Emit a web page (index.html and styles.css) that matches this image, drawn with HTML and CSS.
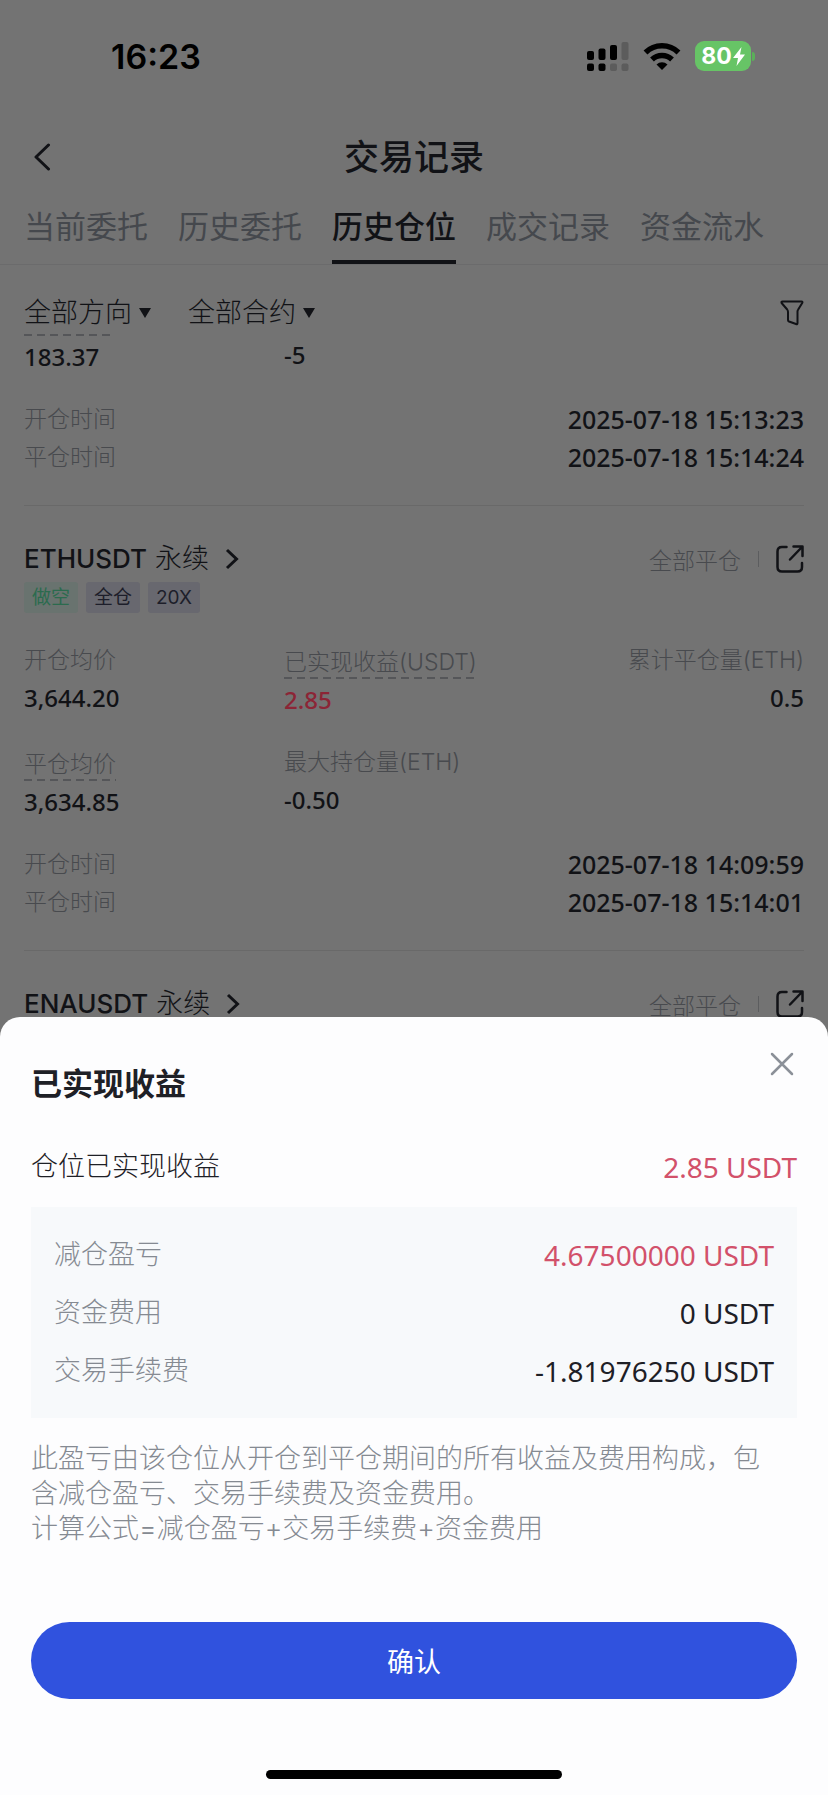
FILE: index.html
```html
<!DOCTYPE html>
<html lang="zh-CN">
<head>
<meta charset="utf-8">
<meta name="viewport" content="width=device-width, initial-scale=1">
<title>交易记录</title>
<link rel="stylesheet" href="styles.css">
</head>
<body>
<div class="page">
  <div class="status">
    <span class="status-time">16:23</span>
    <div class="status-icons">
      <svg width="42" height="30" viewBox="0 0 42 30" aria-hidden="true">
        <g fill="#000"><rect x="0" y="10" width="7" height="9" rx="2"/><rect x="11.500" y="7.500" width="7" height="11.500" rx="2"/><rect x="23" y="4" width="7" height="15" rx="2"/><rect x="0" y="22.500" width="7" height="7.500" rx="2"/><rect x="11.500" y="22.500" width="7" height="7.500" rx="2"/></g>
        <g fill="#5c5c5c"><rect x="34.500" y="1" width="7" height="18" rx="2"/><rect x="23" y="22.500" width="7" height="7.500" rx="2"/><rect x="34.500" y="22.500" width="7" height="7.500" rx="2"/></g>
      </svg>
      <svg width="38" height="28" viewBox="0 0 38 28" aria-hidden="true">
        <g fill="none" stroke="#000" stroke-width="5.500"><path d="M2.500 10.500a23.500 23.500 0 0 1 33 0"/><path d="M9 17.500a14.500 14.500 0 0 1 20 0"/></g>
        <path d="M19 28l-5.500-5.500a8 8 0 0 1 11 0z" fill="#000"/>
      </svg>
      <div class="battery">
        <span class="battery-body">80<svg width="12" height="19" viewBox="0 0 12 19" aria-hidden="true"><path d="M8.500 0L0 11h5L3.500 19 12 7.500H7z" fill="#fff"/></svg></span>
        <span class="battery-nub"></span>
      </div>
    </div>
  </div>

  <header class="header">
    <button class="icon-button" aria-label="返回"><svg width="18" height="28" viewBox="0 0 18 28"><path d="M15.500 2L3 14l12.500 12" fill="none" stroke="#111216" stroke-width="3" stroke-linecap="round" stroke-linejoin="round"/></svg></button>
    <h1 class="title">交易记录</h1>
  </header>

  <nav class="tabs">
    <a class="tab" href="#current">当前委托</a>
    <a class="tab" href="#orders">历史委托</a>
    <a class="tab tab-active" href="#positions" aria-current="page">历史仓位</a>
    <a class="tab" href="#trades">成交记录</a>
    <a class="tab" href="#funds">资金流水</a>
  </nav>

  <div class="filters">
    <button class="filter">全部方向<span class="caret"></span></button>
    <button class="filter">全部合约<span class="caret"></span></button>
    <button class="icon-button filter-icon" aria-label="筛选"><svg width="24" height="26" viewBox="0 0 24 26"><path d="M2.500 1.500h19q1.500 0 .7 1.500l-4 6.500q-.7 1-.7 2v11.500q0 1.600-1.500 1L9 21.500q-1-.5-1-1.500v-8q0-1.500-.8-2.500L1.600 3Q1 1.500 2.500 1.500z" fill="none" stroke="#111216" stroke-width="2" stroke-linejoin="round"/></svg></button>
  </div>

  <main>
    <section class="position">
      <div class="stats stats-cut">
        <div class="stat"><span class="dash"></span><span class="value">183.37</span></div>
        <div class="stat stat-plain"><span class="value">-5</span></div>
      </div>
      <dl class="times">
        <div class="time"><dt>开仓时间</dt><dd>2025-07-18 15:13:23</dd></div>
        <div class="time"><dt>平仓时间</dt><dd>2025-07-18 15:14:24</dd></div>
      </dl>
    </section>

    <section class="position">
      <div class="position-head">
        <h2 class="symbol">ETHUSDT <span class="kind">永续</span></h2>
        <svg class="chevron" width="14" height="22" viewBox="0 0 14 22" aria-hidden="true"><path d="M2 2l9.500 9L2 20" fill="none" stroke="#111216" stroke-width="3"/></svg>
        <span class="state">全部平仓</span>
        <span class="bar"></span>
        <button class="icon-button" aria-label="分享"><svg width="28" height="28" viewBox="0 0 28 28"><g fill="none" stroke="#111216" stroke-width="2.500" stroke-linecap="round" stroke-linejoin="round"><path d="M10.500 2H6Q1.500 2 1.500 6.500V22q0 4.500 4.500 4.500h15.500q4.500 0 4.500-4.500v-4"/><path d="M17.500 1.500H26.500V11M26 2L14 14.500"/></g></svg></button>
      </div>
      <div class="tags"><span class="tag tag-short">做空</span><span class="tag">全仓</span><span class="tag">20X</span></div>
      <div class="stats">
        <div class="stat"><span class="label">开仓均价</span><span class="value">3,644.20</span></div>
        <div class="stat stat-plain"><span class="label label-hint">已实现收益(USDT)</span><span class="value value-red">2.85</span></div>
        <div class="stat stat-end"><span class="label">累计平仓量(ETH)</span><span class="value">0.5</span></div>
        <div class="stat stat-plain"><span class="label label-hint">平仓均价</span><span class="value">3,634.85</span></div>
        <div class="stat"><span class="label">最大持仓量(ETH)</span><span class="value">-0.50</span></div>
      </div>
      <dl class="times">
        <div class="time"><dt>开仓时间</dt><dd>2025-07-18 14:09:59</dd></div>
        <div class="time"><dt>平仓时间</dt><dd>2025-07-18 15:14:01</dd></div>
      </dl>
    </section>

    <section class="position">
      <div class="position-head">
        <h2 class="symbol">ENAUSDT <span class="kind">永续</span></h2>
        <svg class="chevron" width="14" height="22" viewBox="0 0 14 22" aria-hidden="true"><path d="M2 2l9.500 9L2 20" fill="none" stroke="#111216" stroke-width="3"/></svg>
        <span class="state">全部平仓</span>
        <span class="bar"></span>
        <button class="icon-button" aria-label="分享"><svg width="28" height="28" viewBox="0 0 28 28"><g fill="none" stroke="#111216" stroke-width="2.500" stroke-linecap="round" stroke-linejoin="round"><path d="M10.500 2H6Q1.500 2 1.500 6.500V22q0 4.500 4.500 4.500h15.500q4.500 0 4.500-4.500v-4"/><path d="M17.500 1.500H26.500V11M26 2L14 14.500"/></g></svg></button>
      </div>
    </section>
  </main>
</div>

<div class="sheet" role="dialog" aria-modal="true" aria-labelledby="sheet-title">
  <div class="sheet-head">
    <h2 class="sheet-title" id="sheet-title">已实现收益</h2>
    <button class="icon-button close" aria-label="关闭"><svg width="24" height="24" viewBox="0 0 24 24"><path d="M2 2l20 20M22 2L2 22" stroke="#8b9098" stroke-width="2.500" stroke-linecap="round"/></svg></button>
  </div>
  <div class="total"><span>仓位已实现收益</span><span class="amount amount-red">2.85 USDT</span></div>
  <dl class="breakdown">
    <div class="item"><dt>减仓盈亏</dt><dd class="amount amount-red">4.67500000 USDT</dd></div>
    <div class="item"><dt>资金费用</dt><dd class="amount">0 USDT</dd></div>
    <div class="item"><dt>交易手续费</dt><dd class="amount">-1.81976250 USDT</dd></div>
  </dl>
  <p class="note">此盈亏由该仓位从开仓到平仓期间的所有收益及费用构成，包含减仓盈亏、交易手续费及资金费用。<br>计算公式=减仓盈亏+交易手续费+资金费用</p>
  <button class="confirm">确认</button>
  <div class="home"></div>
</div>
</body>
</html>
```
FILE: styles.css
```css
* {
  box-sizing: border-box;
}

body {
  margin: 0;
  min-height: 100vh;
  background: #737373;
  color: #111216;
  font-family: Inter, "Noto Sans CJK SC", sans-serif;
  overflow: hidden;
}

h1, h2, p, dl, dd {
  margin: 0;
}

button {
  padding: 0;
  border: 0;
  background: none;
  color: inherit;
  font: inherit;
}

svg {
  display: block;
  flex: none;
}

.icon-button {
  display: flex;
  align-items: center;
  justify-content: center;
}

/* Status bar */
.status {
  display: flex;
  align-items: center;
  justify-content: space-between;
  height: 112px;
  padding: 0 73px 0 111px;
  color: #000;
}

.status-time {
  font-size: 34px;
  font-weight: 600;
}

.status-icons {
  display: flex;
  align-items: center;
  gap: 14px;
}

.battery {
  display: flex;
  align-items: center;
  gap: 1px;
}

.battery-body {
  display: flex;
  align-items: center;
  justify-content: center;
  gap: 1px;
  width: 56px;
  height: 30px;
  border-radius: 9px;
  background: #67c466;
  color: #fff;
  font-size: 23px;
  font-weight: 700;
}

.battery-nub {
  width: 3px;
  height: 9px;
  border-radius: 0 4px 4px 0;
  background: #5ab059;
}

/* Page header */
.header {
  display: grid;
  grid-template-columns: 1fr auto 1fr;
  align-items: center;
  height: 90px;
  padding: 0 33px;
}

.header .icon-button {
  justify-self: start;
}

.title {
  font-size: 35px;
  font-weight: 500;
  line-height: 48px;
}

.tabs {
  display: flex;
  gap: 30px;
  padding: 0 24px;
  border-bottom: 1px solid #6b6b6c;
}

.tab {
  padding: 5px 0 13px;
  border-bottom: 4px solid transparent;
  color: #45484d;
  font-size: 31px;
  line-height: 40px;
  text-decoration: none;
  white-space: nowrap;
}

.tab-active {
  border-color: #111216;
  color: #111216;
  font-weight: 500;
}

.filters {
  display: flex;
  align-items: center;
  gap: 37px;
  padding: 28px 24px 1px;
}

.filter {
  display: flex;
  align-items: center;
  gap: 7px;
  font-size: 27px;
  font-weight: 300;
  line-height: 40px;
}

.caret {
  border: 6px solid transparent;
  border-top: 10px solid #111216;
  border-bottom: 0;
}

.filter-icon {
  margin-left: auto;
}

/* Closed positions */
.position {
  margin: 0 24px;
  padding-bottom: 31px;
  border-bottom: 1px solid #696969;
}

.position-head {
  display: flex;
  align-items: center;
  height: 38px;
  margin-top: 34px;
}

.symbol {
  display: flex;
  align-items: center;
  gap: 8px;
  font-size: 26px;
  font-weight: 500;
  line-height: 38px;
}

.kind {
  font-size: 27px;
  font-weight: 300;
}

.chevron {
  margin-left: 16px;
}

.state {
  margin-left: auto;
  color: #484a4e;
  font-size: 23px;
  font-weight: 300;
}

.bar {
  width: 1px;
  height: 16px;
  margin: 0 17px;
  background: #5c5d5f;
}

.tags {
  display: flex;
  gap: 8px;
  margin-top: 4px;
}

.tag {
  padding: 0 8px;
  border-radius: 3px;
  background: #68686f;
  color: #1d1e2a;
  font-size: 19px;
  line-height: 31px;
}

.tag-short {
  background: #69736f;
  color: #2b6b4e;
}

.stats {
  display: grid;
  grid-template-columns: repeat(3, 1fr);
  align-items: start;
  row-gap: 28px;
  margin-top: 30px;
}

.stats-cut {
  margin-top: 0;
}

.stat {
  display: flex;
  flex-direction: column;
  align-items: flex-start;
  gap: 4px;
}

.stat-plain {
  padding-top: 4px;
}

.stat-end {
  align-items: flex-end;
}

.label {
  color: #484a4e;
  font-size: 23px;
  font-weight: 300;
  line-height: 34px;
  white-space: nowrap;
}

.label-hint {
  padding-bottom: 2px;
  background: repeating-linear-gradient(90deg, #555659 0 8px, transparent 8px 13px) bottom / 100% 2px no-repeat;
  line-height: 30px;
}

.dash {
  width: 91px;
  height: 2px;
  background: repeating-linear-gradient(90deg, #555659 0 8px, transparent 8px 13px);
}

.value {
  font-family: "Noto Sans", sans-serif;
  font-size: 24px;
  font-weight: 500;
  line-height: 34px;
}

.value-red {
  color: #8c2536;
}

.times {
  display: grid;
  gap: 4px;
  margin-top: 28px;
}

.time {
  display: flex;
  justify-content: space-between;
  font-size: 23px;
  line-height: 34px;
}

.time dt {
  color: #484a4e;
  font-weight: 300;
}

.time dd {
  font-family: "Noto Sans", sans-serif;
  font-size: 25px;
  font-weight: 500;
}

/* Bottom sheet */
.sheet {
  position: fixed;
  right: 0;
  bottom: 0;
  left: 0;
  padding: 34px 31px 16px;
  border-radius: 20px 20px 0 0;
  background: #fdfdfe;
  color: #1e2026;
  font-size: 27px;
  font-weight: 300;
}

.sheet-head {
  display: flex;
  align-items: flex-start;
  justify-content: space-between;
}

.sheet-title {
  margin-top: 13px;
  font-size: 31px;
  font-weight: 700;
  line-height: 40px;
}

.close {
  width: 30px;
  height: 26px;
}

.total {
  display: flex;
  justify-content: space-between;
  margin-top: 43px;
  line-height: 40px;
}

.breakdown {
  display: grid;
  gap: 2px;
  margin-top: 20px;
  padding: 20px 23px 19px;
  background: #f7f9fb;
}

.item {
  display: flex;
  justify-content: space-between;
  line-height: 56px;
}

.item dt {
  color: #858a92;
}

.amount {
  font-family: "Noto Sans", sans-serif;
  font-size: 28px;
  font-weight: 400;
}

.amount-red {
  color: #d2516a;
}

.note {
  margin-top: 23px;
  padding-right: 20px;
  color: #858a92;
  line-height: 35px;
}

.confirm {
  display: block;
  width: 100%;
  height: 77px;
  margin-top: 76px;
  border-radius: 39px;
  background: #3052de;
  color: #fff;
  font-weight: 400;
}

.home {
  width: 296px;
  height: 9px;
  margin: 71px auto 0;
  border-radius: 5px;
  background: #000;
}
```
